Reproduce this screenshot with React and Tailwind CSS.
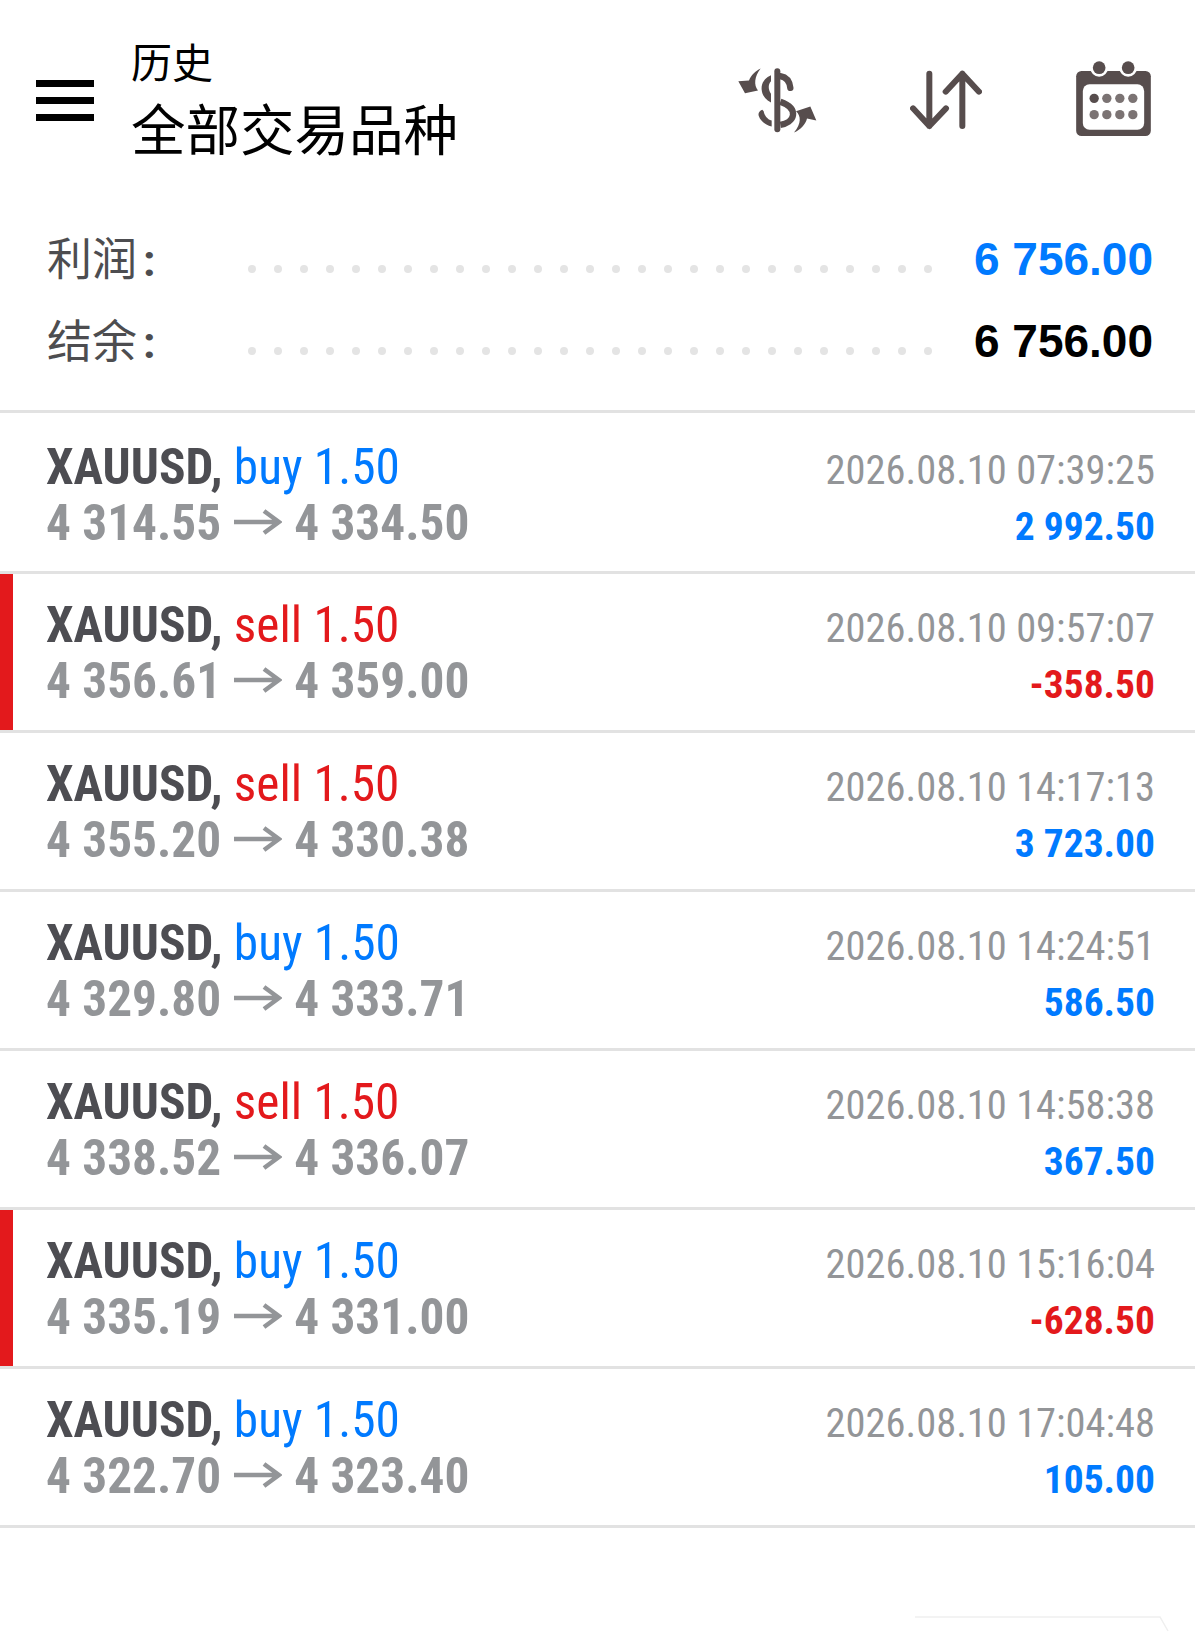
const trades = [
  { side: 'buy', open: '4 314.55', close: '4 334.50', time: '2026.08.10 07:39:25', profit: '2 992.50' },
  { side: 'sell', open: '4 356.61', close: '4 359.00', time: '2026.08.10 09:57:07', profit: '-358.50' },
  { side: 'sell', open: '4 355.20', close: '4 330.38', time: '2026.08.10 14:17:13', profit: '3 723.00' },
  { side: 'buy', open: '4 329.80', close: '4 333.71', time: '2026.08.10 14:24:51', profit: '586.50' },
  { side: 'sell', open: '4 338.52', close: '4 336.07', time: '2026.08.10 14:58:38', profit: '367.50' },
  { side: 'buy', open: '4 335.19', close: '4 331.00', time: '2026.08.10 15:16:04', profit: '-628.50' },
  { side: 'buy', open: '4 322.70', close: '4 323.40', time: '2026.08.10 17:04:48', profit: '105.00' },
];

const ICON = '#574d4d';

function DollarIcon() {
  return (
    <svg width="80" height="67" viewBox="110 80 240 200">
      <path d="M231 92V266" stroke={ICON} strokeWidth="18" strokeLinecap="round" fill="none" />
      <path d="M240 107C258 110 268 124 270 142" stroke={ICON} strokeWidth="19" strokeLinecap="round" fill="none" />
      <path d="M212 104C192 112 182 130 184 148C186 166 196 178 212 186L212 160C204 150 202 132 212 122Z" fill={ICON} />
      <path d="M240 184C268 194 280 208 278 224C276 240 258 250 240 253" stroke={ICON} strokeWidth="19" fill="none" />
      <path d="M186 208C176 212 172 220 176 228C182 244 198 254 214 258V240C200 236 192 224 190 212Z" fill={ICON} />
      <path d="M181 84C165 92 152 104 146 120L114 122L134 158L173 150C160 134 162 108 181 84Z" fill={ICON} />
      <path d="M281 276C300 268 316 252 320 234L348 240L330 198L287 212C302 226 304 248 281 276Z" fill={ICON} />
    </svg>
  );
}

function SwapIcon() {
  return (
    <svg width="72" height="60" viewBox="630 90 216 180" fill="none" stroke={ICON} strokeWidth="18" strokeLinecap="round" strokeLinejoin="round">
      <path d="M688 101V258M639 205L688 258L738 205" />
      <path d="M787 258V101M737 155L787 101L837 155" />
    </svg>
  );
}

function CalendarIcon() {
  const xs = [1182, 1220, 1259, 1298];
  return (
    <svg width="75" height="75" viewBox="1128 62 224 225">
      <rect x="1128" y="92" width="224" height="195" rx="16" fill={ICON} />
      <rect x="1148" y="132" width="184" height="136" rx="20" fill="#fff" />
      <circle cx="1197" cy="82" r="27" fill="#fff" />
      <circle cx="1284" cy="82" r="27" fill="#fff" />
      <circle cx="1197" cy="82" r="19" fill={ICON} />
      <circle cx="1284" cy="82" r="19" fill={ICON} />
      {xs.map((x, i) => (
        <circle key={x} cx={x} cy="174" r="14" fill={i === 0 ? ICON : '#7b7373'} />
      ))}
      {xs.map((x) => (
        <circle key={x} cx={x} cy="223" r="14" fill="#7b7373" />
      ))}
    </svg>
  );
}

function Dots() {
  return (
    <div className="flex gap-[18px]">
      {Array.from({ length: 27 }).map((_, i) => (
        <span key={i} className="block w-2 h-2 rounded-full bg-[#e4e4e4]" />
      ))}
    </div>
  );
}

function SummaryRow({ label, value, color }) {
  return (
    <div className="flex items-center h-[82px] pl-[47px] pr-[42px]">
      <div className="w-[201px] shrink-0 mt-[4px] text-[45px] leading-[82px] text-[#4d4d50]">
        {label}<span className="ml-[6px] font-bold">:</span>
      </div>
      <div className="mt-[20px]"><Dots /></div>
      <div className={`ml-auto font-['Liberation_Sans',sans-serif] text-[46px] leading-[84px] font-bold ${color}`}>{value}</div>
    </div>
  );
}

function Arrow() {
  return (
    <svg width="49" height="26" viewBox="0 0 49 26" className="inline-block mx-[12px] align-[5px]" fill="none" stroke="#939598" strokeWidth="4.5">
      <path d="M1 13H46M31 2L46 13L31 24" />
    </svg>
  );
}

function TradeRow({ trade, first }) {
  const loss = trade.profit.startsWith('-');
  const sideColor = trade.side === 'buy' ? 'text-[#007aff]' : 'text-[#e3191c]';
  return (
    <div className={`flex border-b-[3px] border-[#e2e2e2] ${first ? 'h-[161px]' : 'h-[159px]'}`}>
      <div className={`w-[13px] shrink-0 ${loss ? 'bg-[#e3191c]' : ''}`} />
      <div className={`flex-1 pl-[33px] pr-[40px] grid grid-cols-[1fr_auto] grid-rows-[56px_55px] items-baseline leading-[55px] whitespace-nowrap [font-stretch:75%] ${first ? 'pt-[27px]' : 'pt-[24px]'}`}>
        <div className="text-[49.3px]">
          <span className="font-bold text-[#4d4d52]">XAUUSD, </span>
          <span className={sideColor}>{trade.side} 1.50</span>
        </div>
        <div className="text-[40.5px] text-right text-[#939598]">{trade.time}</div>
        <div className="text-[49.3px] font-bold text-[#939598]">
          {trade.open}<Arrow />{trade.close}
        </div>
        <div className={`text-[39.5px] text-right font-bold ${loss ? 'text-[#e3191c]' : 'text-[#007aff]'}`}>{trade.profit}</div>
      </div>
    </div>
  );
}

export default function App() {
  return (
    <div className="relative h-[1647px] bg-white font-['Roboto','Noto_Sans_CJK_SC',sans-serif]">
      <header className="flex items-center h-[200px] pl-[36px] pr-[44px]">
        <div className="flex flex-col gap-[10px] w-[58px]">
          <span className="block h-[7px] bg-black" />
          <span className="block h-[7px] bg-black" />
          <span className="block h-[7px] bg-black" />
        </div>
        <div className="ml-[37px] text-black">
          <div className="text-[41px] leading-[50px]">历史</div>
          <div className="mt-[11px] text-[54.5px] leading-[62px]">全部交易品种</div>
        </div>
        <div className="ml-auto flex items-center">
          <DollarIcon />
          <div className="ml-[93px]"><SwapIcon /></div>
          <div className="ml-[94px] mb-[4px]"><CalendarIcon /></div>
        </div>
      </header>
      <section className="h-[213px] pt-[18px] border-b-[3px] border-[#e2e2e2]">
        <SummaryRow label="利润" value="6 756.00" color="text-[#007aff]" />
        <SummaryRow label="结余" value="6 756.00" color="text-black" />
      </section>
      {trades.map((t, i) => (
        <TradeRow key={t.time} trade={t} first={i === 0} />
      ))}
      <svg className="absolute left-[890px] top-[1595px]" width="305" height="40" fill="none">
        <path d="M25 22H270L278 36" stroke="#efefef" strokeWidth="1.5" />
      </svg>
    </div>
  );
}
